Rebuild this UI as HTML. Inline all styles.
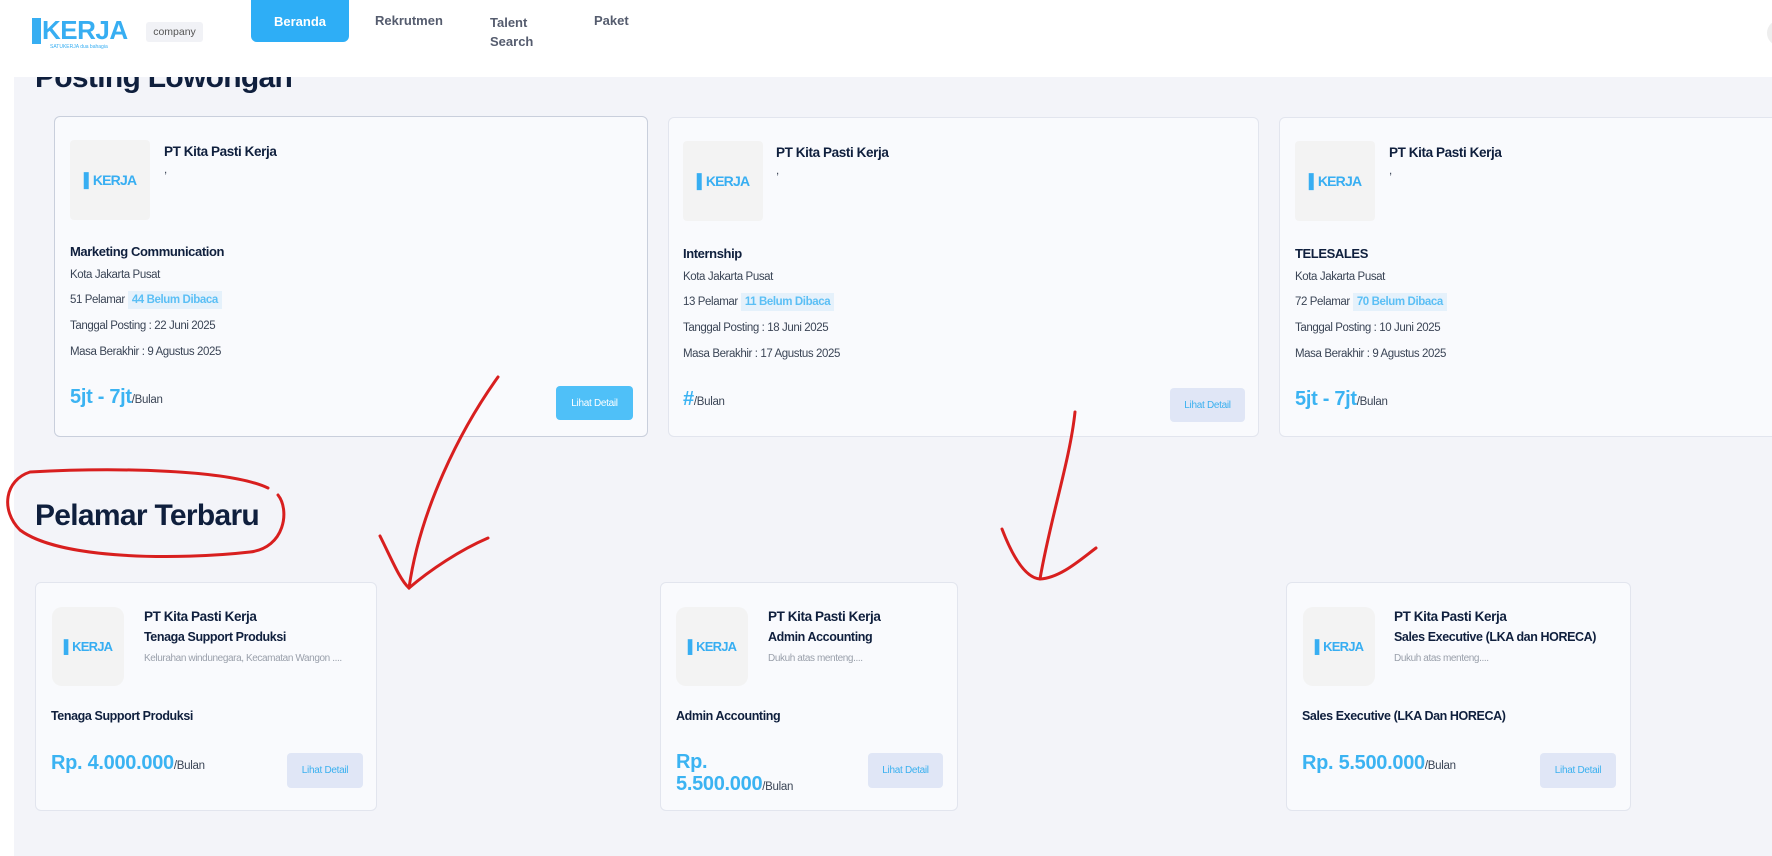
<!DOCTYPE html>
<html><head><meta charset="utf-8"><style>
*{margin:0;padding:0;box-sizing:border-box}
body{width:1772px;height:856px;overflow:hidden;background:#f3f4f9;font-family:"Liberation Sans",sans-serif;position:relative;color:#0f1f3d}
.a{position:absolute;white-space:nowrap}
.hdr{position:absolute;left:0;top:0;width:1772px;height:77px;background:#fff;z-index:5}
.strip{position:absolute;left:0;top:0;width:14px;height:856px;background:#fff}
.logo{position:absolute}
.k{font-weight:bold;color:#37aef2;letter-spacing:-0.5px}
.card{position:absolute;background:#f9fafd;border:1px solid #e2e5ee;border-radius:6px}
.lb{position:absolute;background:#f3f3f3;border-radius:4px;display:flex;align-items:center;justify-content:center}
.lb .k{font-size:14px;letter-spacing:-0.8px}
.cn{font-weight:bold;font-size:13.5px;color:#0f1f3d;letter-spacing:-0.4px}
.jt{font-weight:bold;font-size:13px;color:#0f1f3d;letter-spacing:-0.4px}
.sm{font-size:11.5px;color:#3b4556;letter-spacing:-0.4px}
.sal{font-weight:bold;font-size:20px;color:#3bb3f2;letter-spacing:-0.3px}
.sal span{font-weight:normal;font-size:11.5px;color:#3b4556}
.btn{position:absolute;border-radius:4px;background:#e0e6f6;color:#3ab0ef;font-size:10px;display:flex;align-items:center;justify-content:center;letter-spacing:-0.3px}
.bd{background:#e5f1fb;color:#5bbff5;font-weight:bold;padding:3px 4px;margin-left:3px}
.h1{font-weight:bold;font-size:30px;color:#0f1f3d;letter-spacing:-0.7px}
</style></head><body>
<div class="strip"></div>
<div class="hdr">
  <div class="logo" style="left:32px;top:15px">
    <div style="position:absolute;left:0;top:3px;width:9px;height:26px;background:#37aef2"></div>
    <div class="a k" style="left:10px;top:0;font-size:26px">KERJA</div>
    <div class="a" style="left:18px;top:29px;font-size:5px;color:#37aef2">SATUKERJA dua bahagia</div>
  </div>
  <div class="a" style="left:146px;top:22px;width:57px;height:20px;background:#f1f2f6;border-radius:3px;font-size:10.5px;color:#555;display:flex;align-items:center;justify-content:center">company</div>
  <div class="a" style="left:251px;top:0;width:98px;height:42px;background:#2eaef6;border-radius:0 0 6px 6px;color:#fff;font-weight:bold;font-size:13px;display:flex;align-items:center;justify-content:center">Beranda</div>
  <div class="a" style="left:375px;top:13px;font-weight:bold;font-size:13px;color:#555c6e">Rekrutmen</div>
  <div class="a" style="left:490px;top:13px;font-weight:bold;font-size:13px;color:#555c6e;line-height:19px">Talent<br>Search</div>
  <div class="a" style="left:594px;top:13px;font-weight:bold;font-size:13px;color:#555c6e">Paket</div>
  <div class="a" style="left:1767px;top:20px;width:26px;height:26px;border-radius:50%;background:#eee"></div>
</div>
<div class="a h1" style="left:35px;top:61px;z-index:1">Posting Lowongan</div>

<div class="card" style="left:54px;top:116px;width:594px;height:321px;border-color:#c9cfdc"></div>
<div class="card" style="left:668px;top:117px;width:591px;height:320px"></div>
<div class="card" style="left:1279px;top:117px;width:520px;height:320px"></div>

<div class="a h1" style="left:35px;top:499px">Pelamar Terbaru</div>

<div class="card" style="left:35px;top:582px;width:342px;height:229px"></div>
<div class="card" style="left:660px;top:582px;width:298px;height:229px"></div>
<div class="card" style="left:1286px;top:582px;width:345px;height:229px"></div>

<!-- row1 card 1 -->
<div class="lb" style="left:70px;top:140px;width:80px;height:80px"><span class="k">▌KERJA</span></div>
<div class="a cn" style="left:164px;top:144px">PT Kita Pasti Kerja</div>
<div class="a sm" style="left:164px;top:164px">,</div>
<div class="a jt" style="left:70px;top:244px">Marketing Communication</div>
<div class="a sm" style="left:70px;top:269px">Kota Jakarta Pusat</div>
<div class="a sm" style="left:70px;top:291px;display:flex;align-items:center">51 Pelamar <span class="bd">44 Belum Dibaca</span></div>
<div class="a sm" style="left:70px;top:320px">Tanggal Posting : 22 Juni 2025</div>
<div class="a sm" style="left:70px;top:346px">Masa Berakhir : 9 Agustus 2025</div>
<div class="a sal" style="left:70px;top:386px">5jt - 7jt<span>/Bulan</span></div>
<div class="btn" style="left:556px;top:386px;width:77px;height:34px;background:#4fc0f8;color:#fff">Lihat Detail</div>

<!-- row1 card 2 -->
<div class="lb" style="left:683px;top:141px;width:80px;height:80px"><span class="k">▌KERJA</span></div>
<div class="a cn" style="left:776px;top:145px">PT Kita Pasti Kerja</div>
<div class="a sm" style="left:776px;top:165px">,</div>
<div class="a jt" style="left:683px;top:246px">Internship</div>
<div class="a sm" style="left:683px;top:271px">Kota Jakarta Pusat</div>
<div class="a sm" style="left:683px;top:293px;display:flex;align-items:center">13 Pelamar <span class="bd">11 Belum Dibaca</span></div>
<div class="a sm" style="left:683px;top:322px">Tanggal Posting : 18 Juni 2025</div>
<div class="a sm" style="left:683px;top:348px">Masa Berakhir : 17 Agustus 2025</div>
<div class="a sal" style="left:683px;top:388px">#<span>/Bulan</span></div>
<div class="btn" style="left:1170px;top:388px;width:75px;height:34px">Lihat Detail</div>

<!-- row1 card 3 -->
<div class="lb" style="left:1295px;top:141px;width:80px;height:80px"><span class="k">▌KERJA</span></div>
<div class="a cn" style="left:1389px;top:145px">PT Kita Pasti Kerja</div>
<div class="a sm" style="left:1389px;top:165px">,</div>
<div class="a jt" style="left:1295px;top:246px">TELESALES</div>
<div class="a sm" style="left:1295px;top:271px">Kota Jakarta Pusat</div>
<div class="a sm" style="left:1295px;top:293px;display:flex;align-items:center">72 Pelamar <span class="bd">70 Belum Dibaca</span></div>
<div class="a sm" style="left:1295px;top:322px">Tanggal Posting : 10 Juni 2025</div>
<div class="a sm" style="left:1295px;top:348px">Masa Berakhir : 9 Agustus 2025</div>
<div class="a sal" style="left:1295px;top:388px">5jt - 7jt<span>/Bulan</span></div>

<!-- row2 card 1 -->
<div class="lb" style="left:52px;top:607px;width:72px;height:79px;border-radius:10px"><span class="k" style="font-size:13px">▌KERJA</span></div>
<div class="a cn" style="left:144px;top:609px">PT Kita Pasti Kerja</div>
<div class="a jt" style="left:144px;top:630px;font-size:12.5px">Tenaga Support Produksi</div>
<div class="a sm" style="left:144px;top:653px;font-size:10px;color:#9aa0ab">Kelurahan windunegara, Kecamatan Wangon ....</div>
<div class="a jt" style="left:51px;top:709px;font-size:12.5px">Tenaga Support Produksi</div>
<div class="a sal" style="left:51px;top:752px">Rp. 4.000.000<span>/Bulan</span></div>
<div class="btn" style="left:287px;top:753px;width:76px;height:35px">Lihat Detail</div>

<!-- row2 card 2 -->
<div class="lb" style="left:676px;top:607px;width:72px;height:79px;border-radius:10px"><span class="k" style="font-size:13px">▌KERJA</span></div>
<div class="a cn" style="left:768px;top:609px">PT Kita Pasti Kerja</div>
<div class="a jt" style="left:768px;top:630px;font-size:12.5px">Admin Accounting</div>
<div class="a sm" style="left:768px;top:653px;font-size:10px;color:#9aa0ab">Dukuh atas menteng....</div>
<div class="a jt" style="left:676px;top:709px;font-size:12.5px">Admin Accounting</div>
<div class="a sal" style="left:676px;top:751px;line-height:22px">Rp.<br>5.500.000<span>/Bulan</span></div>
<div class="btn" style="left:868px;top:753px;width:75px;height:35px">Lihat Detail</div>

<!-- row2 card 3 -->
<div class="lb" style="left:1303px;top:607px;width:72px;height:79px;border-radius:10px"><span class="k" style="font-size:13px">▌KERJA</span></div>
<div class="a cn" style="left:1394px;top:609px">PT Kita Pasti Kerja</div>
<div class="a jt" style="left:1394px;top:630px;font-size:12.5px">Sales Executive (LKA dan HORECA)</div>
<div class="a sm" style="left:1394px;top:653px;font-size:10px;color:#9aa0ab">Dukuh atas menteng....</div>
<div class="a jt" style="left:1302px;top:709px;font-size:12.5px">Sales Executive (LKA Dan HORECA)</div>
<div class="a sal" style="left:1302px;top:752px">Rp. 5.500.000<span>/Bulan</span></div>
<div class="btn" style="left:1540px;top:753px;width:76px;height:35px">Lihat Detail</div>

<svg class="a" style="left:0;top:0;z-index:3" width="1772" height="856">
<g fill="none" stroke="#d81f1f" stroke-width="3" stroke-linecap="round">
<path d="M498 377 C460 430 420 510 409 588"/>
<path d="M380 536 C392 560 400 580 409 588 C430 570 460 550 488 538"/>
<path d="M1075 412 C1070 460 1050 520 1040 579"/>
<path d="M1002 529 C1012 555 1025 578 1040 579 C1060 578 1080 560 1096 548"/>
<path d="M268 488 C230 470 120 467 30 472 C5 480 0 510 20 530 C60 560 180 560 250 552 C285 548 290 510 278 495"/>
</g>
</svg>
</body></html>
